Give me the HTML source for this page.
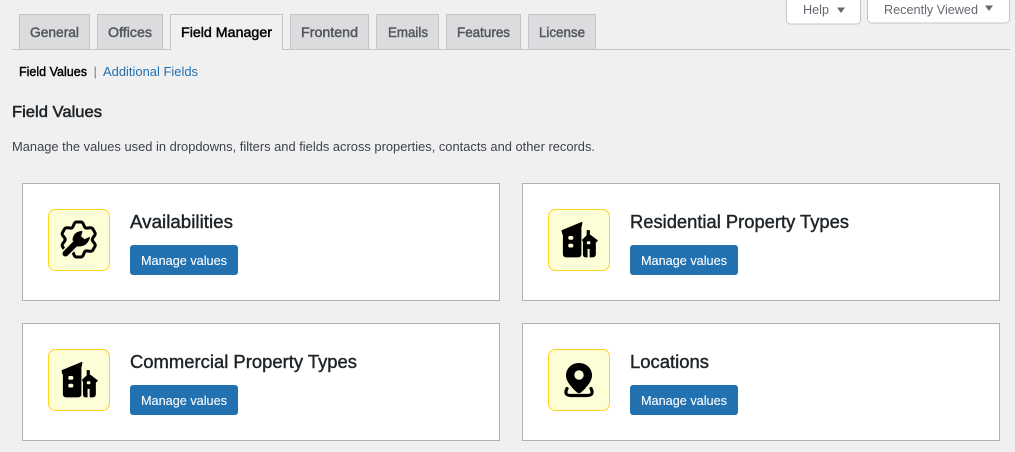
<!DOCTYPE html>
<html lang="en">
<head>
<meta charset="utf-8">
<title>Field Manager</title>
<style>
html,body{margin:0;padding:0;width:1015px;height:452px;overflow:hidden;background:#f0f0f1}
svg{display:block;font-family:"Liberation Sans",sans-serif}
.tab{fill:#dcdcde;stroke:#c3c4c7}
.tt{font-size:14px;fill:#50575e;stroke:#50575e;stroke-width:.45}
.card{fill:#fff;stroke:#b0b0b0}
.ib{fill:#fdfdd6;stroke:#ffd21a;stroke-width:1}
.ct{font-size:18px;fill:#1d2327;stroke:#1d2327;stroke-width:.4}
.btn{fill:#2271b1}
.bt{font-size:13px;fill:#fff;stroke:#fff;stroke-width:.1}
.m{font-size:13px;fill:#50575e}
</style>
</head>
<body>
<svg width="1015" height="452" viewBox="0 0 1015 452" xmlns="http://www.w3.org/2000/svg">
<defs>
<g id="house">
<path d="M562 230.500 L582 222.300 L581.500 226 L581 227 V254 Q581 257 578 257 H566.500 Q563.300 257 563.300 254 V234 L562.500 234 Z" fill="#000" stroke="#000" stroke-width=".8" stroke-linejoin="round"/>
<rect x="568.300" y="236" width="5" height="3.800" rx="1.500" fill="#fdfdd6"/>
<rect x="568.300" y="243.700" width="5" height="3.800" rx="1.500" fill="#fdfdd6"/>
<path d="M582.300 240 L587 235.500 V230.500 H589.500 V234.500 L597.500 240.500 L596.300 242 L595.500 241.500 V254 Q595.500 257 592.500 257 H590 V248.500 H587.200 V257 H585.500 Q583.300 257 583.300 254.500 V241.500 Z" fill="#000" stroke="#000" stroke-width=".7" stroke-linejoin="round"/>
<rect x="586.800" y="241.200" width="3.600" height="3" rx="1" fill="#fdfdd6"/>
</g>
<path id="lobe" d="M-6.750 -11.700C-4.500 -13 -5.300 -17.500 -2.300 -17.500H2.300C5.300 -17.500 4.500 -13 6.750 -11.700" fill="none" stroke="#000" stroke-width="3" stroke-linecap="round"/>
</defs>

<!-- top-right screen options -->
<rect x="786.500" y="-5" width="74" height="29" rx="4" fill="#fff" stroke="#c3c4c7"/>
<text x="803" y="14" font-size="13" fill="#646970" textLength="26" lengthAdjust="spacingAndGlyphs">Help</text>
<path d="M837 7.500H845L841 13Z" fill="#646970"/>
<rect x="867.500" y="-5" width="142" height="28" rx="4" fill="#fff" stroke="#c3c4c7"/>
<text x="884" y="14" font-size="13" fill="#646970" textLength="94" lengthAdjust="spacingAndGlyphs">Recently Viewed</text>
<path d="M985 5.500H993L989 11Z" fill="#646970"/>

<!-- tabs -->
<line x1="12" y1="49.500" x2="1010" y2="49.500" stroke="#c3c4c7"/>
<rect class="tab" x="19.500" y="14.500" width="70" height="35"/>
<text class="tt" x="30" y="37" textLength="49" lengthAdjust="spacingAndGlyphs">General</text>
<rect class="tab" x="97.500" y="14.500" width="65" height="35"/>
<text class="tt" x="108" y="37" textLength="44" lengthAdjust="spacingAndGlyphs">Offices</text>
<path d="M170.500 50V14.500H282.500V50" fill="#f0f0f1" stroke="#c3c4c7"/>
<text class="tt" x="181" y="37" style="fill:#000;stroke:#000" textLength="91" lengthAdjust="spacingAndGlyphs">Field Manager</text>
<rect class="tab" x="290.500" y="14.500" width="78" height="35"/>
<text class="tt" x="301" y="37" textLength="57" lengthAdjust="spacingAndGlyphs">Frontend</text>
<rect class="tab" x="376.500" y="14.500" width="62" height="35"/>
<text class="tt" x="388" y="37" textLength="40" lengthAdjust="spacingAndGlyphs">Emails</text>
<rect class="tab" x="446.500" y="14.500" width="74" height="35"/>
<text class="tt" x="457" y="37" textLength="53" lengthAdjust="spacingAndGlyphs">Features</text>
<rect class="tab" x="528.500" y="14.500" width="67" height="35"/>
<text class="tt" x="539" y="37" textLength="46" lengthAdjust="spacingAndGlyphs">License</text>

<!-- subnav -->
<text x="19" y="76" font-size="13" fill="#000" stroke="#000" stroke-width=".4" textLength="68" lengthAdjust="spacingAndGlyphs">Field Values</text>
<text x="93.500" y="76" font-size="13" fill="#787c82">|</text>
<text x="103" y="76" font-size="13" fill="#2271b1" textLength="95" lengthAdjust="spacingAndGlyphs">Additional Fields</text>

<!-- heading -->
<text x="12" y="117" font-size="16" fill="#1d2327" stroke="#1d2327" stroke-width=".5" textLength="90" lengthAdjust="spacingAndGlyphs">Field Values</text>
<text class="m" x="12" y="151" style="fill:#3c434a" textLength="583" lengthAdjust="spacingAndGlyphs">Manage the values used in dropdowns, filters and fields across properties, contacts and other records.</text>

<!-- card 1 -->
<rect class="card" x="22.500" y="183.500" width="477" height="117"/>
<rect class="ib" x="48.500" y="209.500" width="61" height="61" rx="7"/>
<g transform="translate(78.700 239.500)">
<use href="#lobe"/>
<use href="#lobe" transform="rotate(60)"/>
<use href="#lobe" transform="rotate(120)"/>
<use href="#lobe" transform="rotate(180)"/>
<use href="#lobe" transform="rotate(240)"/>
<use href="#lobe" transform="rotate(300)"/>
</g>
<path d="M65.500 253.500L77 242" stroke="#fdfdd6" stroke-width="9" stroke-linecap="round"/>
<path d="M82 231.500Q73.500 232 73 240L77.500 246Q87 246.500 89.500 237.500L84.500 239.800L80.500 236.500Z" fill="#fdfdd6" stroke="#fdfdd6" stroke-width="3.500" stroke-linejoin="round"/>
<path d="M65.500 253.500L77 242" stroke="#000" stroke-width="6" stroke-linecap="round"/>
<path d="M82 231.500Q73.500 232 73 240L77.500 246Q87 246.500 89.500 237.500L84.500 239.800L80.500 236.500Z" fill="#000" stroke="#000" stroke-width="1" stroke-linejoin="round"/>
<text class="ct" x="130" y="228" textLength="103" lengthAdjust="spacingAndGlyphs">Availabilities</text>
<rect class="btn" x="130" y="245" width="108" height="30" rx="3"/>
<text class="bt" x="141" y="265" textLength="86" lengthAdjust="spacingAndGlyphs">Manage values</text>

<!-- card 2 -->
<rect class="card" x="522.500" y="183.500" width="477" height="117"/>
<rect class="ib" x="548.500" y="209.500" width="61" height="61" rx="7"/>
<use href="#house"/>
<text class="ct" x="630" y="228" textLength="219" lengthAdjust="spacingAndGlyphs">Residential Property Types</text>
<rect class="btn" x="630" y="245" width="108" height="30" rx="3"/>
<text class="bt" x="641" y="265" textLength="86" lengthAdjust="spacingAndGlyphs">Manage values</text>

<!-- card 3 -->
<rect class="card" x="22.500" y="323.500" width="477" height="117"/>
<rect class="ib" x="48.500" y="349.500" width="61" height="61" rx="7"/>
<use href="#house" transform="translate(-500 140)"/>
<text class="ct" x="130" y="368" textLength="227" lengthAdjust="spacingAndGlyphs">Commercial Property Types</text>
<rect class="btn" x="130" y="385" width="108" height="30" rx="3"/>
<text class="bt" x="141" y="405" textLength="86" lengthAdjust="spacingAndGlyphs">Manage values</text>

<!-- card 4 -->
<rect class="card" x="522.500" y="323.500" width="477" height="117"/>
<rect class="ib" x="548.500" y="349.500" width="61" height="61" rx="7"/>
<path d="M579 363C571.500 363 566 368.500 566 375.500C566 381.500 572 388 577 392.500Q579 394 581 392.500C586 388 592 381.500 592 375.500C592 368.500 586.500 363 579 363Z" fill="#000"/>
<circle cx="579" cy="375" r="4.700" fill="#fdfdd6"/>
<path d="M567 388.500Q563.500 395.500 571 395.500H587Q594.500 395.500 591 388.500" fill="none" stroke="#000" stroke-width="3.200" stroke-linecap="round"/>
<text class="ct" x="630" y="368" textLength="79" lengthAdjust="spacingAndGlyphs">Locations</text>
<rect class="btn" x="630" y="385" width="108" height="30" rx="3"/>
<text class="bt" x="641" y="405" textLength="86" lengthAdjust="spacingAndGlyphs">Manage values</text>
</svg>
</body>
</html>
